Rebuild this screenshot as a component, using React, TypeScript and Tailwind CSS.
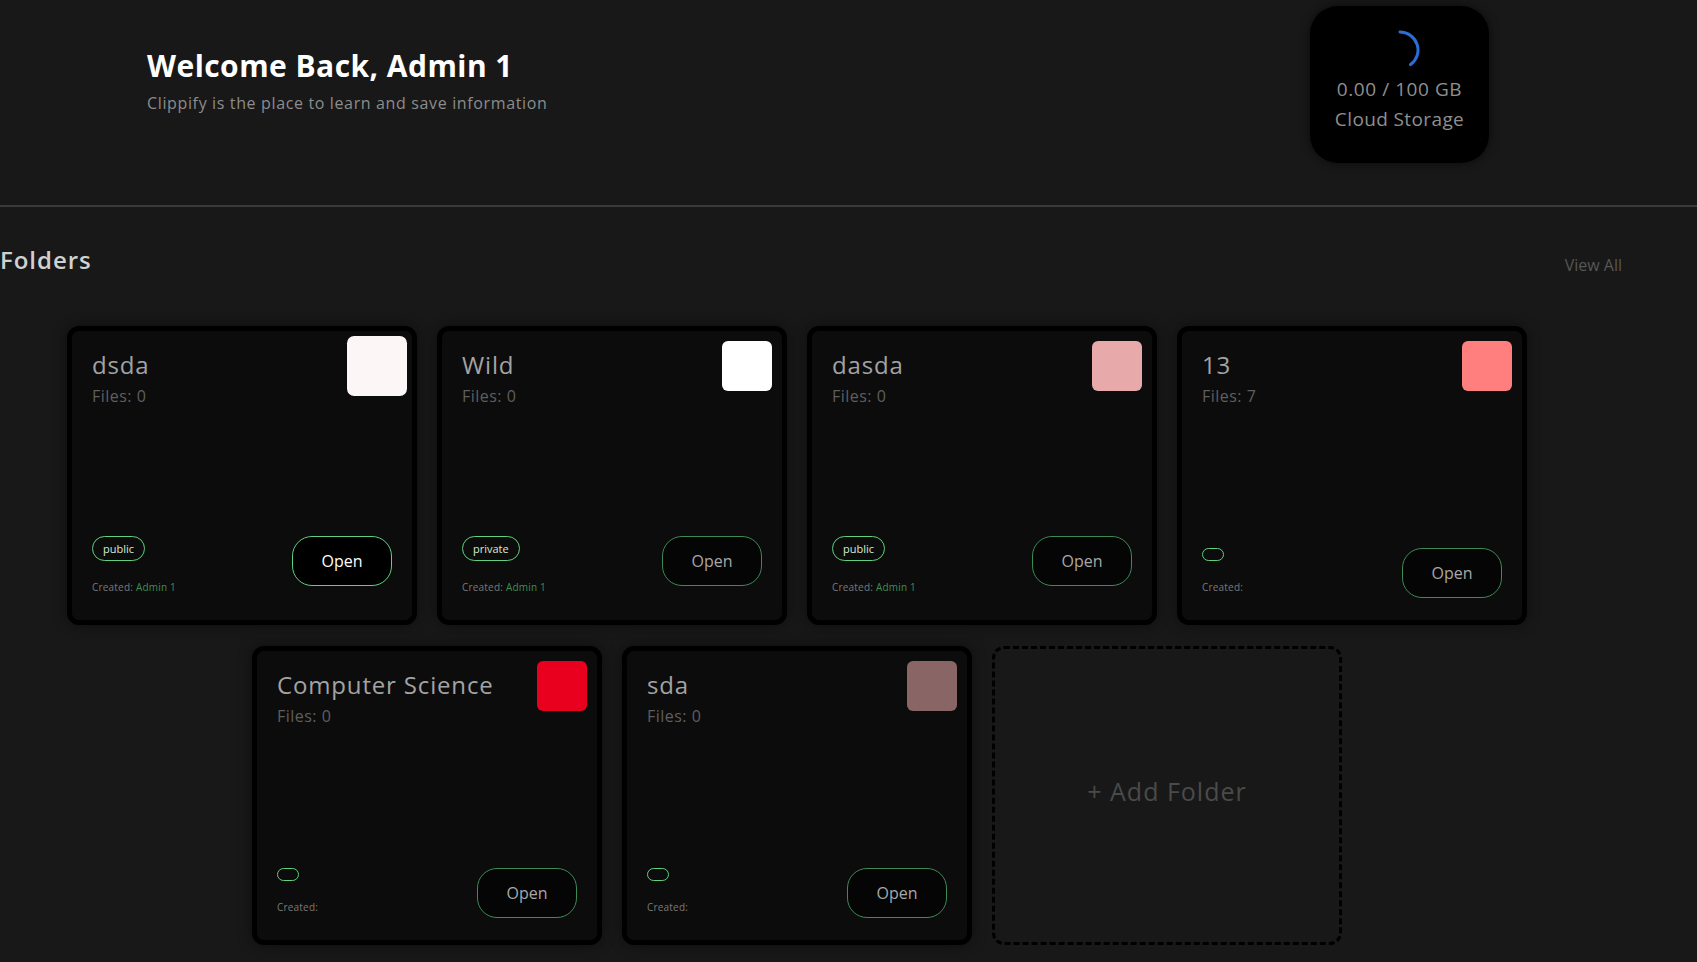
type Folder = {
  name: string;
  files: number;
  color: string;
  visibility?: string;
  creator?: string;
  hovered?: boolean;
};

const folders: Folder[] = [
  { name: "dsda", files: 0, color: "#fdf6f6", visibility: "public", creator: "Admin 1", hovered: true },
  { name: "Wild", files: 0, color: "#ffffff", visibility: "private", creator: "Admin 1" },
  { name: "dasda", files: 0, color: "#e8a9ab", visibility: "public", creator: "Admin 1" },
  { name: "13", files: 7, color: "#ff7f7f" },
  { name: "Computer Science", files: 0, color: "#e8001e" },
  { name: "sda", files: 0, color: "#8a6565" },
];

function Spinner() {
  return (
    <svg width="40" height="40" viewBox="0 0 40 40" fill="none">
      <path d="M20 2 A18 18 0 0 1 30.58 34.56" stroke="#2b6fd6" strokeWidth="3" strokeLinecap="round" />
    </svg>
  );
}

function FolderCard({ folder }: { folder: Folder }) {
  return (
    <div className="w-[350px] h-[299px] rounded-xl border-[5px] border-black bg-[#0c0c0c] flex flex-col justify-between shadow-[0_0_14px_rgba(0,0,0,0.45)]">
      <div className="flex justify-between items-start pt-[10px] pl-[20px] pr-[10px]">
        <div className="mt-[8px]">
          <div className="text-[24px] leading-[32px] tracking-[0.035em] text-[#a3a3a3]">{folder.name}</div>
          <div className="mt-[3px] text-[16px] leading-[24px] tracking-[0.03em] text-[#5f5f5f]">Files: {folder.files}</div>
        </div>
        <div
          className={`w-[50px] h-[50px] rounded-md ${folder.hovered ? "scale-[1.2]" : ""}`}
          style={{ backgroundColor: folder.color }}
        />
      </div>
      <div className="flex justify-between items-start pl-[20px] pr-[20px] pb-[22px]">
        <div className="flex flex-col items-start">
          {folder.visibility ? (
            <span className="block border border-[#5ed07f] rounded-full px-[10px] py-[5.5px] text-[11px] leading-[12px] text-[#d4ecd4]">
              {folder.visibility}
            </span>
          ) : (
            <span className="block w-[22px] h-[13px] border border-[#5ed07f] rounded-full" />
          )}
          <div className="mt-[15px] text-[10px] leading-[22px] tracking-[0.02em] text-[#7a7a7a]">
            Created: <span className="text-[#3d8f55]">{folder.creator}</span>
          </div>
        </div>
        <button
          className={
            folder.hovered
              ? "w-[100px] h-[50px] rounded-[20px] border border-[#5fd083] bg-black text-white text-[16px] font-medium"
              : "w-[100px] h-[50px] rounded-[20px] border border-[#3d8a56] bg-[#050505] text-[#a8a8a8] text-[16px]"
          }
        >
          Open
        </button>
      </div>
    </div>
  );
}

export default function App() {
  return (
    <div className="min-h-screen bg-[#181818] font-['Open_Sans',sans-serif] pb-[20px]">
      <header className="h-[207px] border-b-2 border-[#3a3a3a] flex items-start">
        <div className="pl-[147px] pt-[48px]">
          <h1 className="text-[30px] leading-[36px] font-bold tracking-[0.015em] text-white">Welcome Back, Admin 1</h1>
          <p className="mt-[7px] text-[16px] leading-[24px] tracking-[0.04em] text-[#8c8c8c]">
            Clippify is the place to learn and save information
          </p>
        </div>
        <div className="ml-auto mr-[208px] mt-[6px] w-[179px] h-[157px] rounded-[28px] bg-black flex flex-col items-center pt-[24px] shadow-[0_0_10px_rgba(0,0,0,0.6)]">
          <Spinner />
          <div className="mt-[4px] text-[19px] leading-[30px] tracking-[0.03em] text-[#8f8f8f]">0.00 / 100 GB</div>
          <div className="text-[19px] leading-[30px] tracking-[0.02em] text-[#8f8f8f]">Cloud Storage</div>
        </div>
      </header>

      <section>
        <div className="flex justify-between items-baseline mt-[37px] pr-[75px]">
          <h2 className="text-[24px] leading-[32px] font-semibold tracking-[0.04em] text-[#d0d0d0]">Folders</h2>
          <a className="relative top-[2px] text-[16px] leading-[24px] font-medium text-[#565656]">View All</a>
        </div>

        <div className="mt-[50px] pr-[103px] flex flex-wrap justify-center gap-x-5 gap-y-[21px]">
          {folders.map((f) => (
            <FolderCard key={f.name} folder={f} />
          ))}
          <div className="w-[350px] h-[299px] rounded-xl border-[3px] border-dashed border-black flex items-center justify-center pb-[8px]">
            <span className="text-[25px] font-medium tracking-[0.04em] text-[#4a4a4a]">+ Add Folder</span>
          </div>
        </div>
      </section>
    </div>
  );
}
